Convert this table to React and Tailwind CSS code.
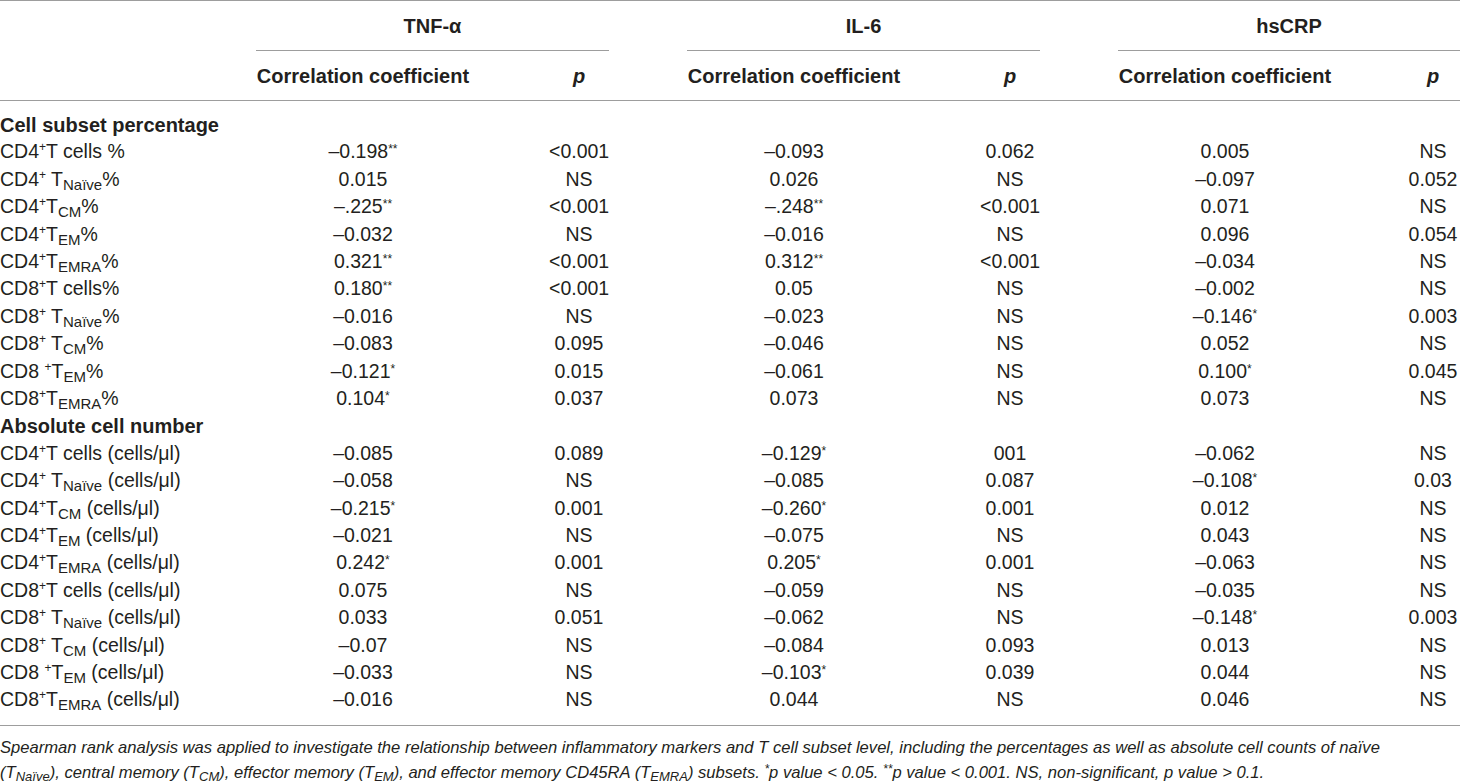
import React from "react";

const Sup = ({ children }) => (
  <span className="relative -top-[7px] text-[12px] leading-none">{children}</span>
);
const Sub = ({ children }) => (
  <span className="relative top-[4px] text-[15px] leading-none">{children}</span>
);
const NoteSub = ({ children }) => (
  <span className="relative top-[3px] text-[13px] leading-none">{children}</span>
);
const Star = ({ children }) => (
  <span className="relative -top-[5px] text-[12px] leading-none">{children}</span>
);

const T = (sub) => (
  <>
    T<Sub>{sub}</Sub>
  </>
);

const pct = [
  [<>CD4<Sup>+</Sup>T cells %</>, ["–0.198", "**"], "<0.001", ["–0.093"], "0.062", ["0.005"], "NS"],
  [<>CD4<Sup>+</Sup> {T("Naïve")}%</>, ["0.015"], "NS", ["0.026"], "NS", ["–0.097"], "0.052"],
  [<>CD4<Sup>+</Sup>{T("CM")}%</>, ["–.225", "**"], "<0.001", ["–.248", "**"], "<0.001", ["0.071"], "NS"],
  [<>CD4<Sup>+</Sup>{T("EM")}%</>, ["–0.032"], "NS", ["–0.016"], "NS", ["0.096"], "0.054"],
  [<>CD4<Sup>+</Sup>{T("EMRA")}%</>, ["0.321", "**"], "<0.001", ["0.312", "**"], "<0.001", ["–0.034"], "NS"],
  [<>CD8<Sup>+</Sup>T cells%</>, ["0.180", "**"], "<0.001", ["0.05"], "NS", ["–0.002"], "NS"],
  [<>CD8<Sup>+</Sup> {T("Naïve")}%</>, ["–0.016"], "NS", ["–0.023"], "NS", ["–0.146", "*"], "0.003"],
  [<>CD8<Sup>+</Sup> {T("CM")}%</>, ["–0.083"], "0.095", ["–0.046"], "NS", ["0.052"], "NS"],
  [<>CD8 <Sup>+</Sup>{T("EM")}%</>, ["–0.121", "*"], "0.015", ["–0.061"], "NS", ["0.100", "*"], "0.045"],
  [<>CD8<Sup>+</Sup>{T("EMRA")}%</>, ["0.104", "*"], "0.037", ["0.073"], "NS", ["0.073"], "NS"],
];

const abs = [
  [<>CD4<Sup>+</Sup>T cells (cells/μl)</>, ["–0.085"], "0.089", ["–0.129", "*"], "001", ["–0.062"], "NS"],
  [<>CD4<Sup>+</Sup> {T("Naïve")} (cells/μl)</>, ["–0.058"], "NS", ["–0.085"], "0.087", ["–0.108", "*"], "0.03"],
  [<>CD4<Sup>+</Sup>{T("CM")} (cells/μl)</>, ["–0.215", "*"], "0.001", ["–0.260", "*"], "0.001", ["0.012"], "NS"],
  [<>CD4<Sup>+</Sup>{T("EM")} (cells/μl)</>, ["–0.021"], "NS", ["–0.075"], "NS", ["0.043"], "NS"],
  [<>CD4<Sup>+</Sup>{T("EMRA")} (cells/μl)</>, ["0.242", "*"], "0.001", ["0.205", "*"], "0.001", ["–0.063"], "NS"],
  [<>CD8<Sup>+</Sup>T cells (cells/μl)</>, ["0.075"], "NS", ["–0.059"], "NS", ["–0.035"], "NS"],
  [<>CD8<Sup>+</Sup> {T("Naïve")} (cells/μl)</>, ["0.033"], "0.051", ["–0.062"], "NS", ["–0.148", "*"], "0.003"],
  [<>CD8<Sup>+</Sup> {T("CM")} (cells/μl)</>, ["–0.07"], "NS", ["–0.084"], "0.093", ["0.013"], "NS"],
  [<>CD8 <Sup>+</Sup>{T("EM")} (cells/μl)</>, ["–0.033"], "NS", ["–0.103", "*"], "0.039", ["0.044"], "NS"],
  [<>CD8<Sup>+</Sup>{T("EMRA")} (cells/μl)</>, ["–0.016"], "NS", ["0.044"], "NS", ["0.046"], "NS"],
];

const Coef = ({ v }) => (
  <div className="w-[214px] text-center whitespace-nowrap">
    {v[0]}
    {v[1] && <Star>{v[1]}</Star>}
  </div>
);

const Row = ({ r }) => (
  <div className="flex h-[27.4px] items-center">
    <div className="w-[256px] whitespace-nowrap">{r[0]}</div>
    <Coef v={r[1]} />
    <div className="w-[139px] pl-[79px] text-center">{r[2]}</div>
    <div className="w-[78px]" />
    <Coef v={r[3]} />
    <div className="w-[139px] pl-[79px] text-center">{r[4]}</div>
    <div className="w-[78px]" />
    <Coef v={r[5]} />
    <div className="w-[128px] pl-[74px] text-center">{r[6]}</div>
  </div>
);

const Section = ({ title }) => (
  <div className="flex h-[27.4px] items-center font-bold text-[20px]">{title}</div>
);

const App = () => {
  return (
    <div className="w-[1460px] h-[783px] bg-white text-[#231f20] font-['Liberation_Sans',Arial,sans-serif] text-[19.5px] overflow-hidden">
      <div className="flex h-[51px] border-t border-[#9d9d9d] font-bold text-[20px]">
        <div className="w-[256px]" />
        <div className="w-[353px] flex items-center justify-center border-b border-[#9d9d9d]">TNF-α</div>
        <div className="w-[78px]" />
        <div className="w-[353px] flex items-center justify-center border-b border-[#9d9d9d]">IL-6</div>
        <div className="w-[78px]" />
        <div className="w-[342px] flex items-center justify-center border-b border-[#9d9d9d]">hsCRP</div>
      </div>
      <div className="flex h-[50px] items-center border-b border-[#9d9d9d] font-bold text-[20px]">
        <div className="w-[256px]" />
        <div className="w-[214px] text-center">Correlation coefficient</div>
        <div className="w-[139px] pl-[79px] text-center italic">p</div>
        <div className="w-[78px]" />
        <div className="w-[214px] text-center">Correlation coefficient</div>
        <div className="w-[139px] pl-[79px] text-center italic">p</div>
        <div className="w-[78px]" />
        <div className="w-[214px] text-center">Correlation coefficient</div>
        <div className="w-[128px] pl-[74px] text-center italic">p</div>
      </div>
      <div className="pt-[10px] pb-[11px] border-b border-[#9d9d9d]">
        <Section title="Cell subset percentage" />
        {pct.map((r, i) => (
          <Row key={"p" + i} r={r} />
        ))}
        <Section title="Absolute cell number" />
        {abs.map((r, i) => (
          <Row key={"a" + i} r={r} />
        ))}
      </div>
      <p className="pt-[9px] italic text-[16.6px] leading-[25px] whitespace-nowrap">
        Spearman rank analysis was applied to investigate the relationship between inflammatory markers and T cell subset level, including the percentages as well as absolute cell counts of naïve
        <br />
        (T<NoteSub>Naïve</NoteSub>), central memory (T<NoteSub>CM</NoteSub>), effector memory (T<NoteSub>EM</NoteSub>), and effector memory CD45RA (T<NoteSub>EMRA</NoteSub>) subsets. <Star>*</Star>p value &lt; 0.05. <Star>**</Star>p value &lt; 0.001. NS, non-significant, p value &gt; 0.1.
      </p>
    </div>
  );
};

export default App;
